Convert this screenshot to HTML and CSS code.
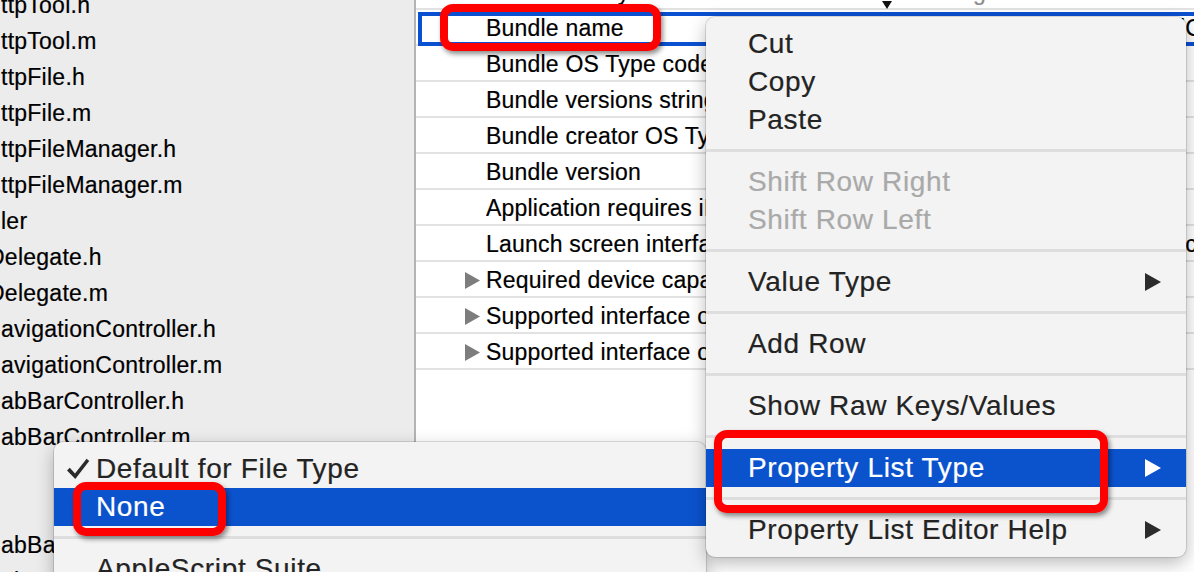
FILE: index.html
```html
<!DOCTYPE html>
<html>
<head>
<meta charset="utf-8">
<title>Property List Editor</title>
<link rel="stylesheet" href="styles.css">
</head>
<body>
<div class="window">
  <aside class="sidebar">
    <ul class="files">
      <li>ttpTool.h</li>
      <li>ttpTool.m</li>
      <li>ttpFile.h</li>
      <li>ttpFile.m</li>
      <li>ttpFileManager.h</li>
      <li>ttpFileManager.m</li>
      <li>ler</li>
      <li class="cut">Delegate.h</li>
      <li class="cut">Delegate.m</li>
      <li>avigationController.h</li>
      <li>avigationController.m</li>
      <li>abBarController.h</li>
      <li>abBarController.m</li>
      <li>&nbsp;</li>
      <li>&nbsp;</li>
      <li>abBarItem.h</li>
      <li>abBarItem.m</li>
    </ul>
  </aside>
  <main class="plist">
    <div class="row">
      <span class="disc"></span>
      <span class="key">InfoDictionary version</span>
      <span class="pop pop-low"><svg width="10" height="8" viewBox="0 0 10 8"><polygon points="0,0 10,0 5,8" fill="#111"/></svg></span>
      <span class="type">String</span>
      <span class="val">6.0</span>
    </div>
    <div class="row selected">
      <span class="disc"></span>
      <span class="key">Bundle name</span>
      <span class="pop"></span>
      <span class="type"></span>
      <span class="val">lC</span>
    </div>
    <div class="row"><span class="disc"></span><span class="key">Bundle OS Type code</span></div>
    <div class="row"><span class="disc"></span><span class="key">Bundle versions string, short</span></div>
    <div class="row"><span class="disc"></span><span class="key">Bundle creator OS Type code</span></div>
    <div class="row"><span class="disc"></span><span class="key">Bundle version</span></div>
    <div class="row"><span class="disc"></span><span class="key">Application requires iPhone environment</span></div>
    <div class="row">
      <span class="disc"></span>
      <span class="key">Launch screen interface file base name</span>
      <span class="pop"></span>
      <span class="type"></span>
      <span class="val">ic</span>
    </div>
    <div class="row"><span class="disc"><svg width="15" height="17" viewBox="0 0 15 17"><polygon points="0,0 15,8.5 0,17" fill="#7d7d7d"/></svg></span><span class="key">Required device capabilities</span></div>
    <div class="row"><span class="disc"><svg width="15" height="17" viewBox="0 0 15 17"><polygon points="0,0 15,8.5 0,17" fill="#7d7d7d"/></svg></span><span class="key">Supported interface orientations</span></div>
    <div class="row"><span class="disc"><svg width="15" height="17" viewBox="0 0 15 17"><polygon points="0,0 15,8.5 0,17" fill="#7d7d7d"/></svg></span><span class="key">Supported interface orientations (iPad)</span></div>
  </main>
</div>

<div class="menu submenu">
  <div class="item"><span class="check"><svg width="24" height="22" viewBox="0 0 24 22"><path d="M1 12.5 L3.8 9.8 L9 15.6 L20.6 0.8 L23.2 3 L9.3 21 Z" fill="#2b2b2b"/></svg></span><span class="label">Default for File Type</span></div>
  <div class="item active"><span class="check"></span><span class="label">None</span></div>
  <div class="sep"></div>
  <div class="item"><span class="check"></span><span class="label">AppleScript Suite</span></div>
</div>

<div class="menu context">
  <div class="item"><span class="label">Cut</span></div>
  <div class="item"><span class="label">Copy</span></div>
  <div class="item"><span class="label">Paste</span></div>
  <div class="sep"></div>
  <div class="item disabled"><span class="label">Shift Row Right</span></div>
  <div class="item disabled"><span class="label">Shift Row Left</span></div>
  <div class="sep"></div>
  <div class="item"><span class="label">Value Type</span><svg class="arrow" width="16" height="18" viewBox="0 0 16 18"><polygon points="0,0 16,9 0,18" fill="currentColor"/></svg></div>
  <div class="sep"></div>
  <div class="item"><span class="label">Add Row</span></div>
  <div class="sep"></div>
  <div class="item"><span class="label">Show Raw Keys/Values</span></div>
  <div class="sep"></div>
  <div class="item active"><span class="label">Property List Type</span><svg class="arrow" width="16" height="18" viewBox="0 0 16 18"><polygon points="0,0 16,9 0,18" fill="currentColor"/></svg></div>
  <div class="sep"></div>
  <div class="item"><span class="label">Property List Editor Help</span><svg class="arrow" width="16" height="18" viewBox="0 0 16 18"><polygon points="0,0 16,9 0,18" fill="currentColor"/></svg></div>
</div>

<div class="mark mark-bundle"></div>
<div class="mark mark-plist"></div>
<div class="mark mark-none"></div>
</body>
</html>
```

FILE: styles.css
```css
html, body {
  margin: 0;
  padding: 0;
}
body {
  width: 1194px;
  height: 572px;
  overflow: hidden;
  position: relative;
  background: #fff;
  font-family: "Liberation Sans", Arial, sans-serif;
  color: #000;
  -webkit-text-stroke: 0.2px currentColor;
}

.window {
  display: flex;
  height: 572px;
}

/* ---------- sidebar ---------- */
.sidebar {
  width: 414px;
  flex: none;
  background: #ececec;
  border-right: 2px solid #b4b4b4;
  overflow: hidden;
}
.files {
  list-style: none;
  margin: -13px 0 0;
  padding: 0;
  font-size: 23px;
  letter-spacing: 0.25px;
}
.files li {
  height: 36px;
  line-height: 36px;
  padding-left: 1px;
  white-space: nowrap;
}
.files li.cut {
  text-indent: -13px;
}

/* ---------- property list table ---------- */
.plist {
  flex: 1;
  overflow: hidden;
  background: #fff;
  font-size: 23px;
  letter-spacing: 0.2px;
}
.row {
  position: relative;
  display: flex;
  align-items: center;
  height: 36px;
  box-sizing: border-box;
  border-bottom: 2px solid #e2e2e2;
  padding: 2px 0 0 46px;
  white-space: nowrap;
}
.row:first-child {
  margin-top: -26px;
}
.row.selected::before {
  content: "";
  position: absolute;
  left: 2px;
  top: 2px;
  right: -10px;
  bottom: -2px;
  border: 4px solid #0b50d0;
}
.disc {
  width: 24px;
  flex: none;
  display: flex;
  align-items: center;
  padding-left: 3px;
  box-sizing: border-box;
}
.key {
  width: 396px;
  flex: none;
  overflow: hidden;
}
.pop {
  width: 24px;
  flex: none;
  display: flex;
}
.pop-low {
  align-self: flex-end;
  margin-bottom: -1px;
}
.type {
  width: 80px;
  flex: none;
  text-align: right;
  color: #8a8a8a;
}
.val {
  padding-left: 194px;
}

/* ---------- menus ---------- */
.menu {
  position: absolute;
  box-sizing: border-box;
  padding: 8px 0;
  background: #f3f3f3;
  border-radius: 9px;
  box-shadow: 0 0 0 1px rgba(0, 0, 0, 0.12), 0 6px 18px rgba(0, 0, 0, 0.28);
  font-size: 28px;
  letter-spacing: 0.65px;
  color: #232323;
  white-space: nowrap;
}
.context {
  left: 706px;
  top: 17px;
  width: 480px;
  height: 540px;
}
.submenu {
  left: 54px;
  top: 442px;
  width: 652px;
  height: 200px;
}
.item {
  display: flex;
  align-items: center;
  height: 38px;
  padding: 0 25px 0 42px;
}
.submenu .item {
  padding-left: 12px;
}
.item .label {
  flex: 1;
}
.item .check {
  width: 30px;
  flex: none;
  display: flex;
  align-items: center;
}
.item .arrow {
  flex: none;
  color: #2b2b2b;
}
.item.disabled {
  color: #a9a9a9;
}
.item.active {
  background: #0b52cd;
  color: #fff;
}
.item.active .arrow {
  color: #fff;
}
.sep {
  height: 3px;
  background: #dedede;
  margin: 10px 0 11px;
}

/* ---------- red annotation boxes ---------- */
.mark {
  position: absolute;
  box-sizing: border-box;
  border: 8px solid #ff0000;
  border-radius: 13px;
  box-shadow: 2px 3px 5px rgba(0, 0, 0, 0.45);
}
.mark-bundle {
  left: 440px;
  top: 4px;
  width: 221px;
  height: 47px;
}
.mark-plist {
  left: 714px;
  top: 430px;
  width: 394px;
  height: 83px;
}
.mark-none {
  left: 73px;
  top: 482px;
  width: 153px;
  height: 54px;
}
```
